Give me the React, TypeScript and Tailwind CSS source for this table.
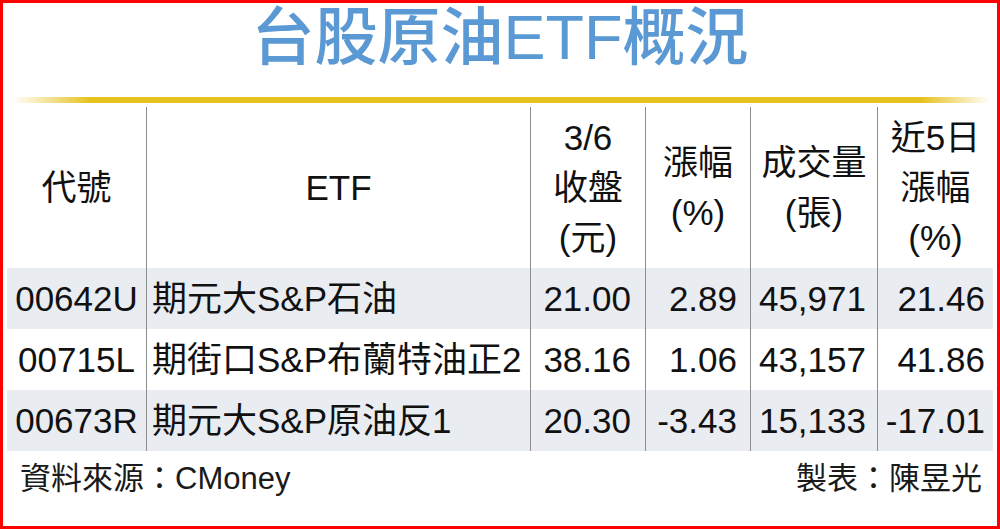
const FONT = "font-['Liberation_Sans','Noto_Sans_CJK_TC',sans-serif]";

const COLS = [
  'w-[139px] justify-center',
  'w-[384px] border-l border-[#8c8c8c] justify-start pl-[5px]',
  'w-[115px] border-l border-[#8c8c8c] justify-end pr-[14px]',
  'w-[105px] border-l border-[#8c8c8c] justify-end pr-[13px]',
  'w-[127px] border-l border-[#8c8c8c] justify-end pr-[11px]',
  'w-[116px] border-l border-[#8c8c8c] justify-end pr-[8px]',
];

const HEAD_COLS = [
  'w-[139px]',
  'w-[384px] border-l border-[#8c8c8c]',
  'w-[115px] border-l border-[#8c8c8c]',
  'w-[105px] border-l border-[#8c8c8c]',
  'w-[127px] border-l border-[#8c8c8c]',
  'w-[116px] border-l border-[#8c8c8c]',
];

const headers = [
  ['代號'],
  ['ETF'],
  ['3/6', '收盤', '(元)'],
  ['漲幅', '(%)'],
  ['成交量', '(張)'],
  ['近5日', '漲幅', '(%)'],
];

const rows = [
  ['00642U', '期元大S&P石油', '21.00', '2.89', '45,971', '21.46'],
  ['00715L', '期街口S&P布蘭特油正2', '38.16', '1.06', '43,157', '41.86'],
  ['00673R', '期元大S&P原油反1', '20.30', '-3.43', '15,133', '-17.01'],
];

export default function App() {
  return (
    <div className={`w-[1000px] h-[529px] border-[3px] border-[#ff0000] bg-white flex flex-col ${FONT}`}>
      {/* 標題 */}
      <div className="h-[94px] flex justify-center pt-[3px]">
        <h1 className="text-[63px] leading-none font-medium text-[#5b99d4]">台股原油ETF概況</h1>
      </div>

      {/* 黃線 */}
      <div className="h-[6px] ml-[9px] mr-[7px] bg-[linear-gradient(to_right,#ffffff,#e6c21f_8%,#e6c21f_93%,#ffffff)]" />

      {/* 表格 */}
      <div className="mt-[4px] mx-[4px] text-[35px] text-[#111]">
        <div className="flex h-[161px]">
          {headers.map((lines, i) => (
            <div key={i} className={`${HEAD_COLS[i]} flex flex-col items-center justify-center leading-[50px]`}>
              {lines.map((l) => (
                <span key={l}>{l}</span>
              ))}
            </div>
          ))}
        </div>
        {rows.map((row, r) => (
          <div key={r} className={`flex h-[61px] ${r % 2 === 0 ? 'bg-[#e9ecf1]' : 'bg-white'}`}>
            {row.map((cell, i) => (
              <div key={i} className={`${COLS[i]} flex items-center leading-none whitespace-nowrap`}>
                {cell}
              </div>
            ))}
          </div>
        ))}
      </div>

      {/* 來源 */}
      <div className="flex-1 flex items-start justify-between pt-[12px] pl-[17px] pr-[15px] text-[31px] leading-[32px] text-[#1a1a1a]">
        <span>資料來源：CMoney</span>
        <span>製表：陳昱光</span>
      </div>
    </div>
  );
}
